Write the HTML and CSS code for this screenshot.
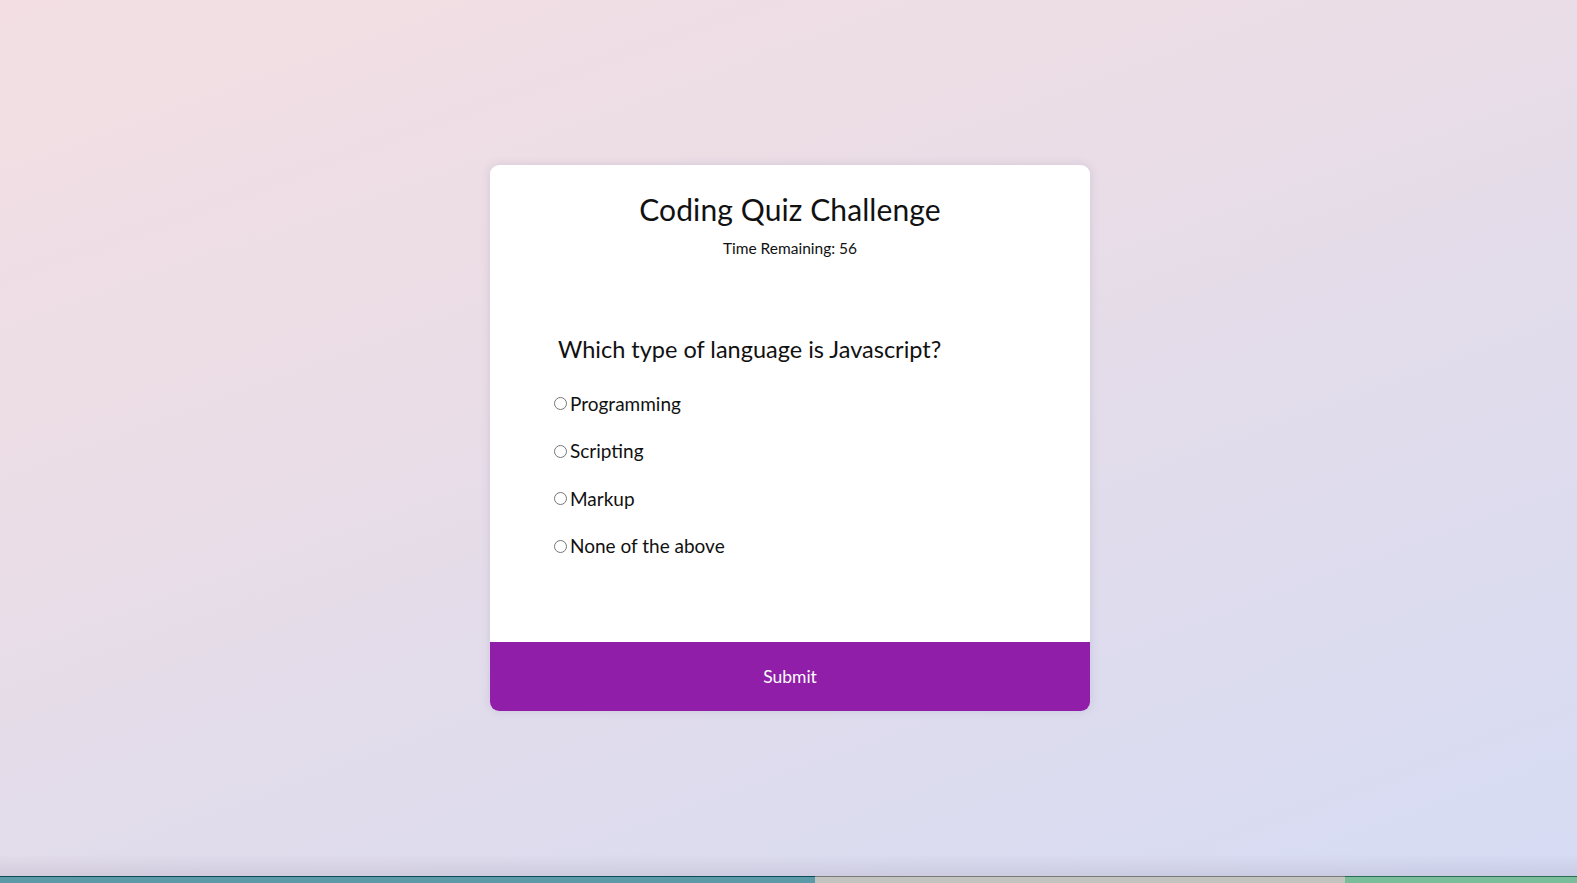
FILE: index.html
```html
<!DOCTYPE html>
<html lang="en">
<head>
<meta charset="utf-8">
<title>Coding Quiz Challenge</title>
<link rel="stylesheet" href="styles.css">
</head>
<body>
<main class="page">
  <div class="card">
    <header class="card-head">
      <h1 class="title">Coding Quiz Challenge</h1>
      <p class="timer">Time Remaining: 56</p>
    </header>
    <section class="quiz">
      <h2 class="question">Which type of language is Javascript?</h2>
      <ul class="options">
        <li><label class="option"><input type="radio" name="answer"><span>Programming</span></label></li>
        <li><label class="option"><input type="radio" name="answer"><span>Scripting</span></label></li>
        <li><label class="option"><input type="radio" name="answer"><span>Markup</span></label></li>
        <li><label class="option"><input type="radio" name="answer"><span>None of the above</span></label></li>
      </ul>
    </section>
    <button class="submit" type="button">Submit</button>
  </div>
</main>
<div class="dock">
  <div class="seg seg-a"></div>
  <div class="seg seg-b"></div>
  <div class="seg seg-c"></div>
</div>
</body>
</html>
```

FILE: styles.css
```css
* { box-sizing: border-box; }
html, body { margin: 0; padding: 0; }
body {
  font-family: "Lato", "Open Sans", sans-serif;
  color: #111;
  overflow: hidden;
  background: #dcdcec;
}
.page {
  height: 876px;
  padding: 0 0 0 3px;
  display: flex;
  align-items: center;
  justify-content: center;
  background: linear-gradient(160deg, #f3dfe3 0%, #ebdde6 35%, #e0dcec 65%, #d6dcf4 100%);
  position: relative;
}
.page::after {
  content: "";
  position: absolute;
  left: 0; right: 0; bottom: 0;
  height: 22px;
  background: linear-gradient(to bottom, rgba(0,0,0,0), rgba(60,40,70,0.09));
  pointer-events: none;
}
.card {
  width: 600px;
  background: #fff;
  border-radius: 9px;
  overflow: hidden;
  box-shadow: 0 0 10px rgba(100, 100, 140, 0.18);
  display: flex;
  flex-direction: column;
}
.card-head {
  padding-top: 24px;
  text-align: center;
}
.title {
  margin: 0;
  font-size: 30px;
  font-weight: 400;
  line-height: 40px;
  letter-spacing: 0.1px;
}
.timer {
  margin: 10px 0 0;
  font-size: 15.5px;
  line-height: 18px;
}
.quiz {
  padding: 77px 68px 83px 64px;
}
.question {
  margin: 0 0 27px 4px;
  font-size: 23.5px;
  font-weight: 400;
  line-height: 30px;
}
.options {
  list-style: none;
  margin: 0;
  padding: 0;
  display: flex;
  flex-direction: column;
  gap: 21.5px;
}
.option {
  display: flex;
  align-items: center;
  font-size: 19px;
  line-height: 26px;
  cursor: pointer;
}
.option input {
  margin: 0 3px 0 0;
  width: 13px;
  height: 13px;
}
.submit {
  border: 0;
  background: #911ea8;
  color: #fff;
  height: 69px;
  font-family: inherit;
  font-size: 17.5px;
  cursor: pointer;
}
.dock {
  display: flex;
  height: 7px;
}
.seg { height: 7px; }
.seg-a {
  width: 815px;
  background: linear-gradient(to bottom, #0e4a58 0 1px, #5d9aa8 1px);
}
.seg-b {
  width: 530px;
  background: linear-gradient(to bottom, #7a7a78 0 1px, #c3c4bf 1px);
}
.seg-c {
  flex: 1;
  background: linear-gradient(to bottom, #2d6a52 0 1px, #79bd9b 1px);
}
```
